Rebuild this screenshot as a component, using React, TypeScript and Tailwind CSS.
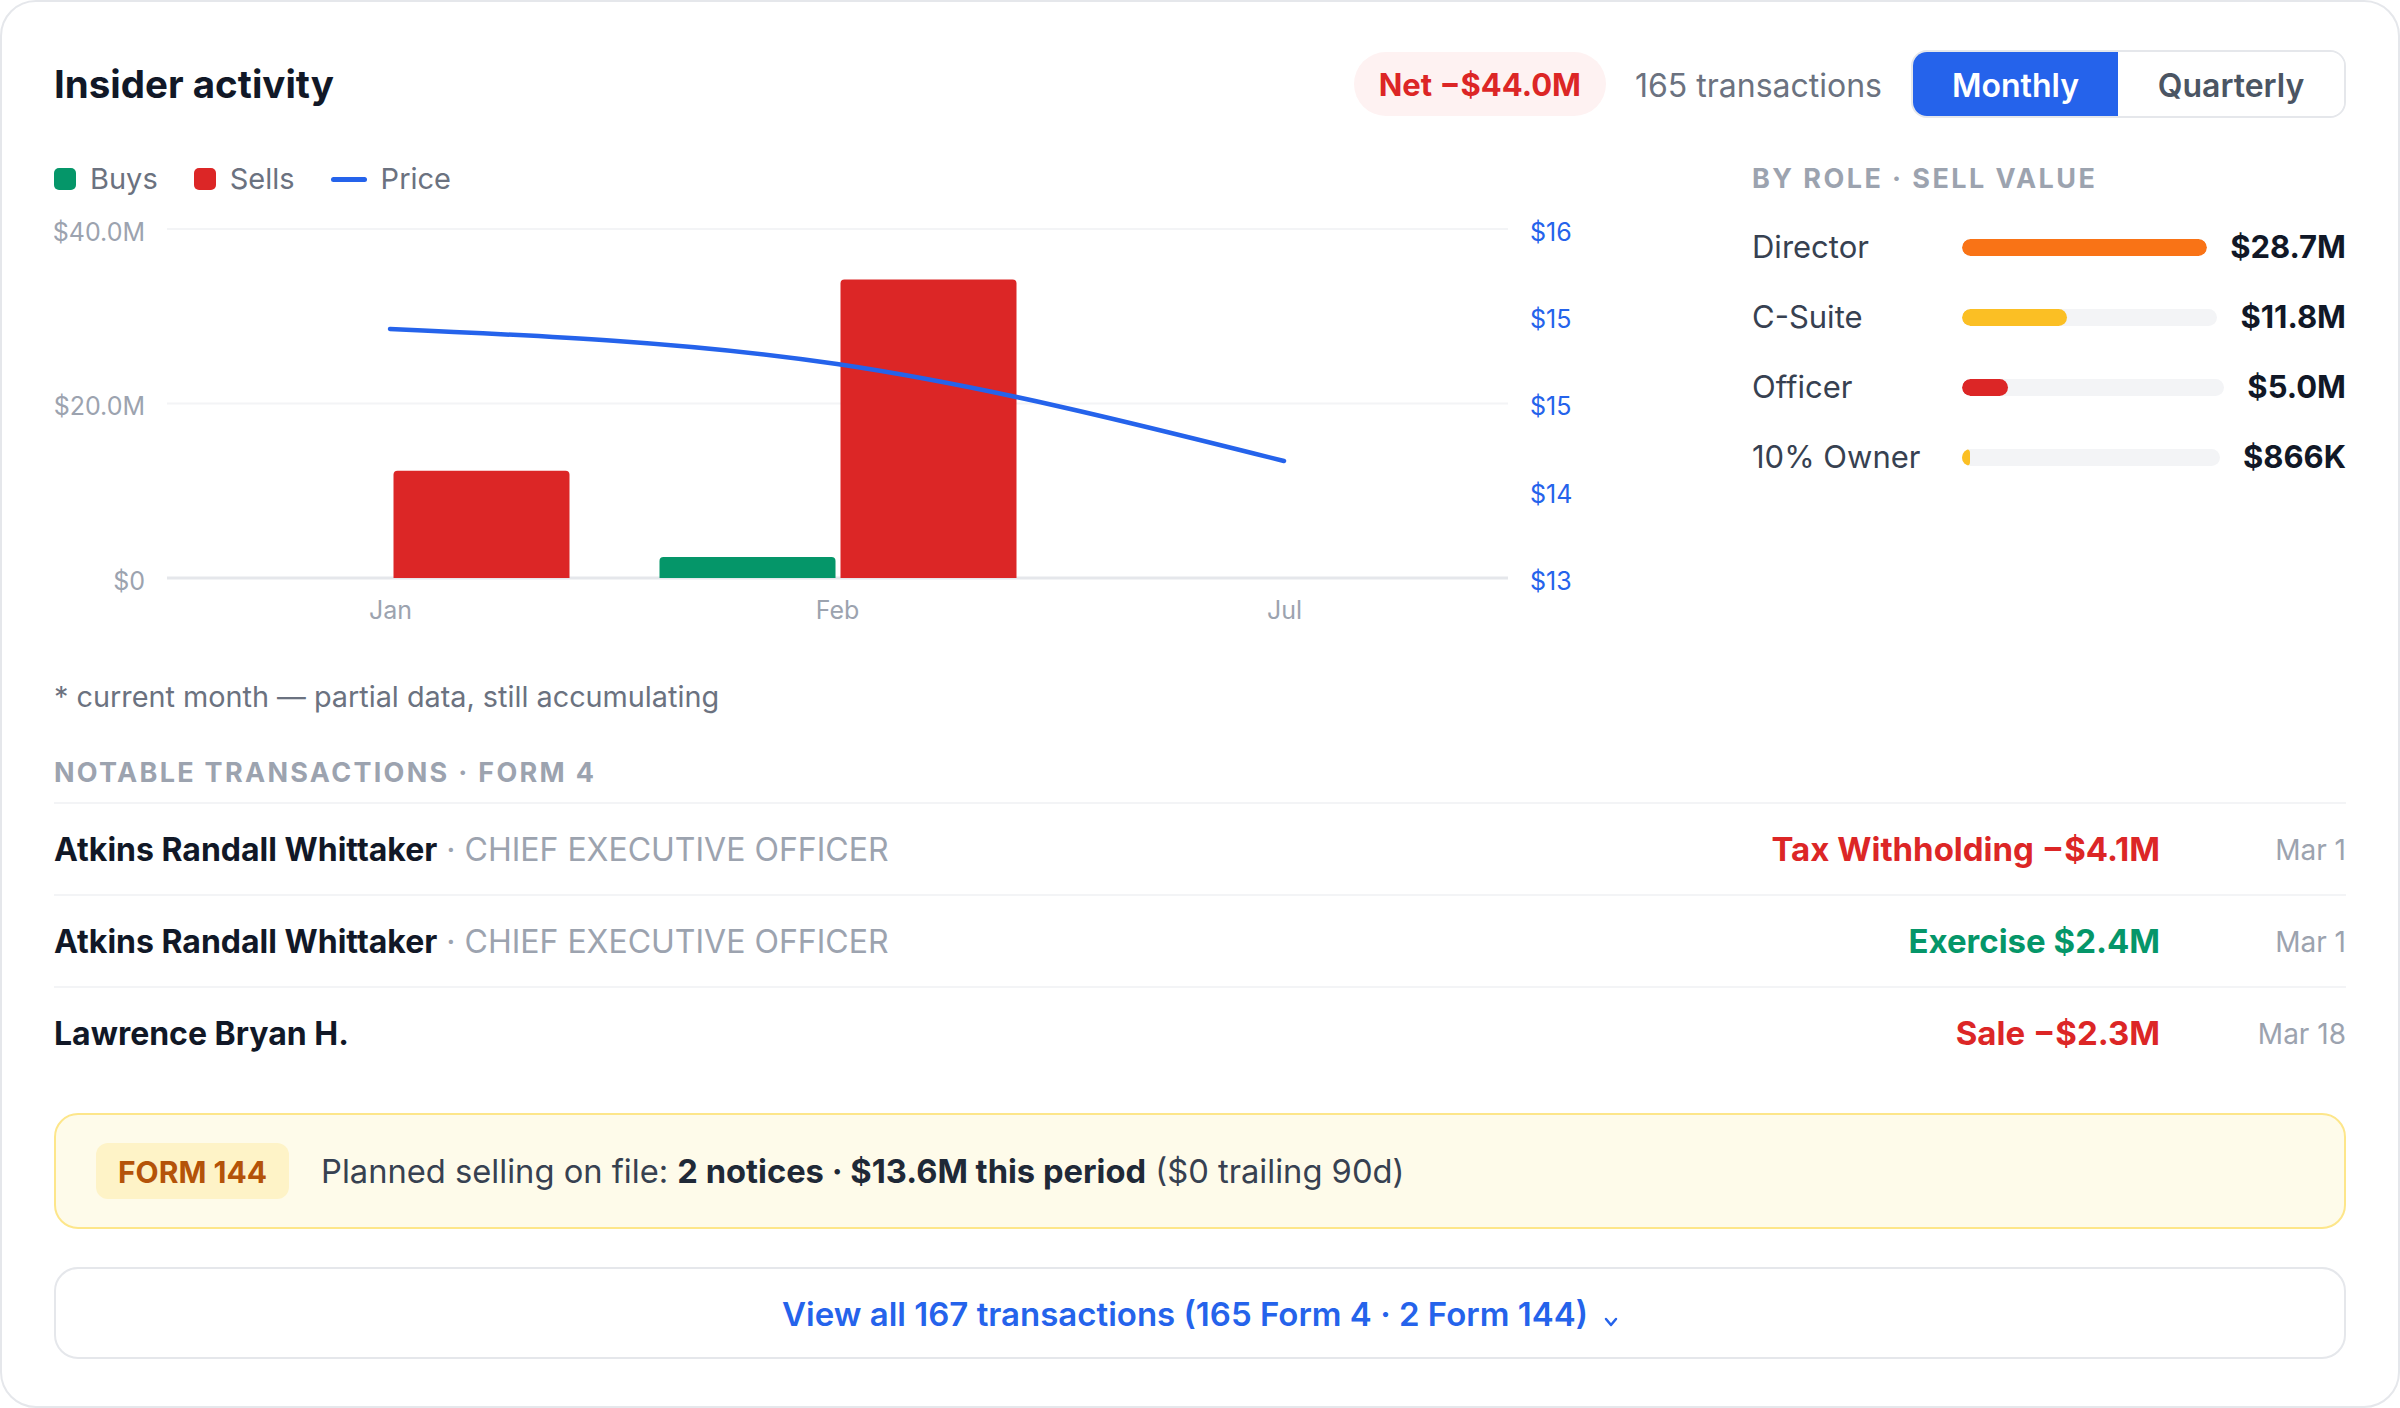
import React from 'react'

type Role = { label: string; value: number; text: string; fill: string }

const roles: Role[] = [
  { label: 'Director', value: 28.7, text: '$28.7M', fill: 'bg-[#f97316]' },
  { label: 'C-Suite', value: 11.8, text: '$11.8M', fill: 'bg-[#fbbf24]' },
  { label: 'Officer', value: 5.0, text: '$5.0M', fill: 'bg-[#dc2626]' },
  { label: '10% Owner', value: 0.866, text: '$866K', fill: 'bg-[#fbbf24]' },
]

type Tx = { name: string; title?: string; amount: string; buy: boolean; date: string }

const txs: Tx[] = [
  { name: 'Atkins Randall Whittaker', title: 'CHIEF EXECUTIVE OFFICER', amount: 'Tax Withholding −$4.1M', buy: false, date: 'Mar 1' },
  { name: 'Atkins Randall Whittaker', title: 'CHIEF EXECUTIVE OFFICER', amount: 'Exercise $2.4M', buy: true, date: 'Mar 1' },
  { name: 'Lawrence Bryan H.', amount: 'Sale −$2.3M', buy: false, date: 'Mar 18' },
]

// plot area inside the svg
const PL = 113
const PR = 1454
const TOP = 28
const BASE = 377
const BAND = (PR - PL) / 3

const leftTicks = [
  { y: TOP, label: '$40.0M' },
  { y: (TOP + BASE) / 2, label: '$20.0M' },
  { y: BASE, label: '$0' },
]
const rightTicks = ['$16', '$15', '$15', '$14', '$13']
const months = ['Jan', 'Feb', 'Jul']

function barTop(m: number) {
  return BASE - (m / 40) * (BASE - TOP)
}

function Chart() {
  const cx = (i: number) => PL + BAND * i + BAND / 2
  const bw = 176
  const bars = [
    { x: cx(0) + 3, v: 12.3, c: '#dc2626' },
    { x: cx(1) - bw - 2, v: 2.4, c: '#059669' },
    { x: cx(1) + 3, v: 34.2, c: '#dc2626' },
  ]
  return (
    <svg width={1530} height={430} className="block">
      {leftTicks.map((t, i) => (
        <g key={i}>
          <line x1={PL} x2={PR} y1={t.y} y2={t.y} stroke={i === 2 ? '#e5e7eb' : '#f3f4f6'} strokeWidth={i === 2 ? 3 : 2} />
          <text x={91} y={t.y + 5} textAnchor="end" dominantBaseline="middle" fontSize={25} fill="#9ca3af">
            {t.label}
          </text>
        </g>
      ))}
      {rightTicks.map((l, i) => (
        <text key={i} x={1476} y={TOP + ((BASE - TOP) / 4) * i + 5} dominantBaseline="middle" fontSize={25} fill="#2563eb">
          {l}
        </text>
      ))}
      {bars.map((b, i) => {
        const y = barTop(b.v)
        return (
          <path
            key={i}
            d={`M${b.x},${BASE} V${y + 4} Q${b.x},${y} ${b.x + 4},${y} H${b.x + bw - 4} Q${b.x + bw},${y} ${b.x + bw},${y + 4} V${BASE} Z`}
            fill={b.c}
          />
        )
      })}
      <path
        d="M336,128 C485,134.5 634,141 783,163 C932,185 1081,222.5 1230,260"
        fill="none"
        stroke="#2563eb"
        strokeWidth={4.5}
        strokeLinecap="round"
      />
      {months.map((m, i) => (
        <text key={m} x={cx(i)} y={411} textAnchor="middle" dominantBaseline="middle" fontSize={25} fill="#9ca3af">
          {m}
        </text>
      ))}
    </svg>
  )
}

export default function App() {
  return (
    <div className="min-h-screen bg-white font-['Inter',sans-serif]">
      <div className="h-[1408px] rounded-[36px] border-2 border-[#e5e7eb] px-[52px] pt-[48px] pb-[47px]">
        {/* header */}
        <div className="flex h-[68px] items-center justify-between">
          <h1 className="text-[38.5px] leading-none font-bold text-[#111827]">Insider activity</h1>
          <div className="flex items-center gap-[29px]">
            <span className="flex h-[64px] items-center rounded-full bg-[#fef2f2] px-[25px] pt-[3px] text-[31px] font-bold text-[#dc2626]">
              Net −$44.0M
            </span>
            <span className="pt-[3px] text-[32px] text-[#6b7280]">165 transactions</span>
            <div className="flex h-[68px] overflow-hidden rounded-[16px] border-2 border-[#e5e7eb]">
              <button type="button" className="w-[205px] bg-[#2563eb] pt-[3px] text-[32px] font-semibold text-white">
                Monthly
              </button>
              <button type="button" className="w-[226px] bg-white pt-[3px] text-[32px] font-semibold text-[#4b5563]">
                Quarterly
              </button>
            </div>
          </div>
        </div>

        {/* chart + roles */}
        <div className="mt-[39px] flex justify-between">
          <div className="w-[1530px]">
            <div className="flex h-[44px] items-center gap-[36px] text-[29px] text-[#6b7280]">
              <span className="flex items-center gap-[14px]">
                <span className="h-[22px] w-[22px] rounded-[5px] bg-[#059669]" />
                Buys
              </span>
              <span className="flex items-center gap-[14px]">
                <span className="h-[22px] w-[22px] rounded-[5px] bg-[#dc2626]" />
                Sells
              </span>
              <span className="flex items-center gap-[14px]">
                <span className="h-[5px] w-[36px] rounded-full bg-[#2563eb]" />
                Price
              </span>
            </div>
            <Chart />
            <p className="mt-[46px] h-[40px] text-[28.8px] leading-[40px] text-[#6b7280]">
              * current month — partial data, still accumulating
            </p>
          </div>

          <div className="w-[594px]">
            <div className="flex h-[44px] items-center text-[27px] font-bold tracking-[0.09em] text-[#9ca3af]">
              BY ROLE · SELL VALUE
            </div>
            <div className="mt-[11px]">
              {roles.map((r) => (
                <div key={r.label} className="flex h-[70px] items-center">
                  <span className="w-[210px] shrink-0 text-[31px] text-[#374151]">{r.label}</span>
                  <div className="h-[17px] flex-1 overflow-hidden rounded-full bg-[#f3f4f6]">
                    <div className={`h-full rounded-full ${r.fill}`} style={{ width: `${(r.value / 28.7) * 100}%`, minWidth: 8 }} />
                  </div>
                  <span className="ml-[23px] text-right text-[31px] font-bold text-[#111827]">{r.text}</span>
                </div>
              ))}
            </div>
          </div>
        </div>

        {/* notable */}
        <div className="mt-[36px] flex h-[40px] items-center text-[27px] font-bold tracking-[0.085em] text-[#9ca3af]">
          NOTABLE TRANSACTIONS · FORM 4
        </div>
        <div className="mt-[9px]">
          {txs.map((t, i) => (
            <div key={i} className="flex h-[92px] items-center border-t-2 border-[#f3f4f6] pt-[2px]">
              <div className="flex-1 text-[32px]">
                <span className="font-bold text-[#111827]">{t.name}</span>
                {t.title && <span className="text-[#9ca3af]"> · {t.title}</span>}
              </div>
              <span className={`text-[33px] font-bold ${t.buy ? 'text-[#059669]' : 'text-[#dc2626]'}`}>{t.amount}</span>
              <span className="w-[186px] text-right text-[28px] text-[#9ca3af]">{t.date}</span>
            </div>
          ))}
        </div>

        {/* form 144 */}
        <div className="mt-[35px] flex h-[116px] items-center gap-[32px] rounded-[24px] border-2 border-[#fde68a] bg-[#fefbea] px-[40px]">
          <span className="flex h-[56px] items-center rounded-[12px] bg-[#fef3c7] px-[22px] pt-[2px] text-[30px] font-bold text-[#b45309]">
            FORM 144
          </span>
          <p className="pt-[2px] text-[32.7px] text-[#374151]">
            Planned selling on file: <span className="font-bold text-[#1f2937]">2 notices · $13.6M this period</span> ($0 trailing 90d)
          </p>
        </div>

        {/* view all */}
        <button
          type="button"
          className="mt-[38px] flex h-[92px] w-full items-center justify-center rounded-[24px] border-2 border-[#e5e7eb] bg-white pt-[4px] text-[33px] font-semibold text-[#2563eb]"
        >
          View all 167 transactions (165 Form 4 · 2 Form 144)
          <svg width="14" height="10" viewBox="0 0 14 10" className="mt-[14px] ml-[16px]">
            <polyline points="2,2 7,8 12,2" fill="none" stroke="#2563eb" strokeWidth="2.5" strokeLinecap="round" strokeLinejoin="round" />
          </svg>
        </button>
      </div>
    </div>
  )
}
